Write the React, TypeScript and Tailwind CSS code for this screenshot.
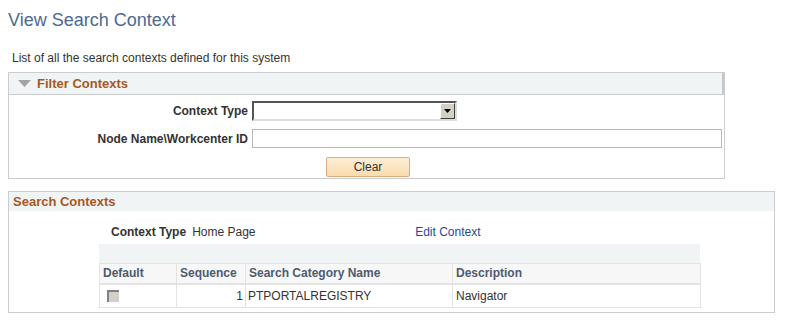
import React from "react";

export default function App() {
  return (
    <div className="w-[785px] h-[321px] bg-white overflow-hidden text-[12px] text-[#333333]" style={{ fontFamily: '"Liberation Sans", Arial, sans-serif' }}>
      <div className="pl-[8px] pt-[9px] text-[18px] leading-[22px] text-[#4a6a92]">View Search Context</div>
      <div className="pl-[12px] pt-[20px] leading-[14px] text-[#333333]">List of all the search contexts defined for this system</div>

      {/* Filter Contexts */}
      <div className="ml-[8px] mt-[7px] w-[717px] border border-[#c9cdd2]">
        <div className="h-[22px] bg-[#f1f4f5] border-b border-[#c9cdd2] border-r-2 border-r-[#c4c8cd] flex items-center">
          <svg width="13" height="7" viewBox="0 0 13 7" className="ml-[9px] mr-[6px] mb-[1px]">
            <polygon points="0,0 13,0 6.5,7" fill="#a3a3a7" />
          </svg>
          <span className="text-[13px] font-bold text-[#a8581b]">Filter Contexts</span>
        </div>
        <div className="pt-[6px] pb-[1px]">
          <div className="flex items-center h-[20px]">
            <div className="w-[243px] text-right font-bold pr-[4px] text-[#333]">Context Type</div>
            <div className="w-[205px] h-[20px] border-2 border-t-[#555] border-l-[#555] border-b-[#ddd] border-r-[#ddd] bg-white flex justify-end">
              <div className="w-[15px] h-[16px] bg-[#d4d0c8] border border-t-[#fff] border-l-[#fff] border-b-[#404040] border-r-[#404040] flex items-center justify-center">
                <svg width="7" height="4" viewBox="0 0 7 4"><polygon points="0,0 7,0 3.5,4" fill="#000" /></svg>
              </div>
            </div>
          </div>
          <div className="flex items-center h-[19px] mt-[8px]">
            <div className="w-[243px] text-right font-bold pr-[4px] text-[#333]">Node Name\Workcenter ID</div>
            <div className="w-[470px] h-[19px] border border-[#b9b9b9] bg-white" />
          </div>
          <div className="flex mt-[9px] pl-[317px]">
            <button className="w-[84px] h-[20px] rounded-[2px] border border-[#e0aa80] bg-gradient-to-b from-[#fdeed5] to-[#fadcae] text-[12px] text-[#333] leading-[18px]" style={{ fontFamily: '"Liberation Sans", Arial, sans-serif' }}>Clear</button>
          </div>
        </div>
      </div>

      {/* Search Contexts */}
      <div className="ml-[8px] mt-[12px] w-[767px] h-[122px] border border-[#c9cdd2]">
        <div className="h-[19px] bg-[#f1f4f5] flex items-center pl-[4px]">
          <span className="text-[13px] font-bold text-[#a8581b]">Search Contexts</span>
        </div>
        <div className="flex items-center h-[14px] mt-[14px]">
          <div className="ml-[102px] font-bold">Context Type</div>
          <div className="ml-[6px] w-[223px]">Home Page</div>
          <div className="text-[#1f4a99]">Edit Context</div>
        </div>
        <div className="ml-[90px] mt-[5px] w-[601px]">
          <div className="h-[19px] bg-[#f1f4f5]" />
          <table className="w-[601px] border-collapse table-fixed">
            <colgroup>
              <col className="w-[77px]" />
              <col className="w-[69px]" />
              <col className="w-[207px]" />
              <col className="w-[248px]" />
            </colgroup>
            <thead>
              <tr className="h-[20px] bg-[#f7f7f7]">
                <th className="text-left font-bold text-[#4d5b70] pl-[3px] border border-[#e3e3e3] border-b-2">Default</th>
                <th className="text-left font-bold text-[#4d5b70] pl-[3px] border border-[#e3e3e3] border-b-2">Sequence</th>
                <th className="text-left font-bold text-[#4d5b70] pl-[3px] border border-[#e3e3e3] border-b-2">Search Category Name</th>
                <th className="text-left font-bold text-[#4d5b70] pl-[3px] border border-[#e3e3e3] border-b-2">Description</th>
              </tr>
            </thead>
            <tbody>
              <tr className="h-[24px]">
                <td className="pl-[7px] border border-[#e3e3e3]">
                  <div className="w-[12px] h-[12px] bg-[#d4d0c8] border-t-2 border-l-2 border-t-[#808080] border-l-[#808080] mt-[1px]" />
                </td>
                <td className="text-right pr-[2px] border border-[#e3e3e3]">1</td>
                <td className="pl-[2px] border border-[#e3e3e3]">PTPORTALREGISTRY</td>
                <td className="pl-[3px] border border-[#e3e3e3]">Navigator</td>
              </tr>
            </tbody>
          </table>
        </div>
      </div>
    </div>
  );
}
